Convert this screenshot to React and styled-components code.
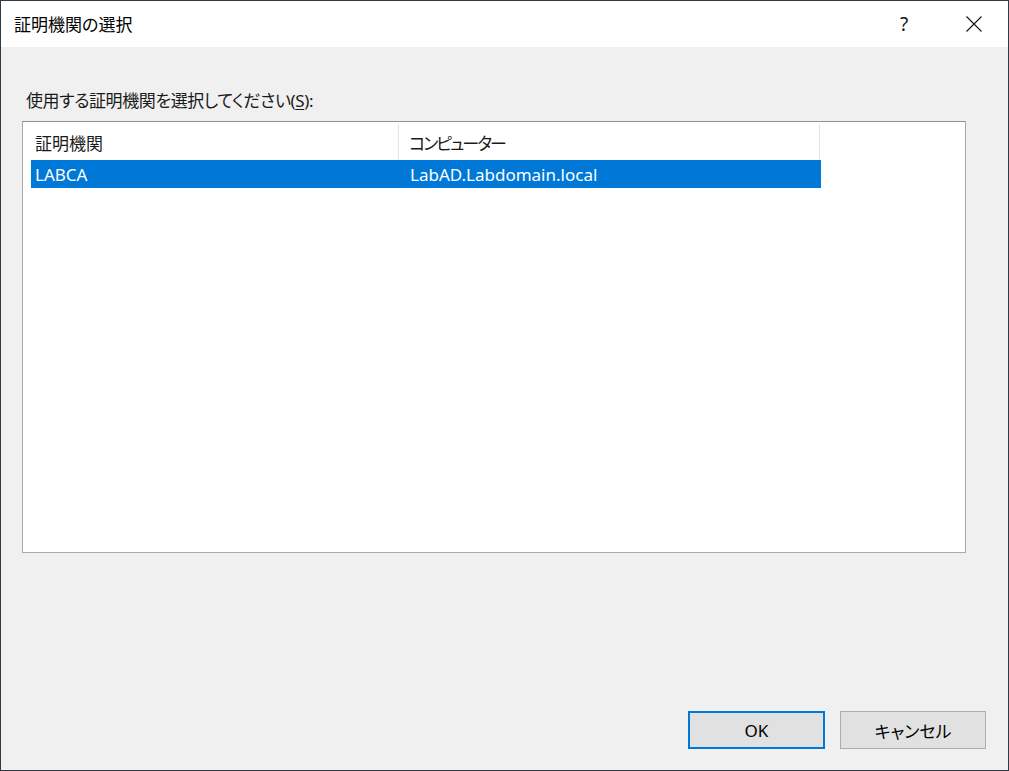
import React from "react";
import styled, { createGlobalStyle } from "styled-components";

const Global = createGlobalStyle`
  html, body {
    margin: 0;
    padding: 0;
    background: #f0f0f0;
  }
  * {
    box-sizing: border-box;
  }
`;

const Window = styled.div`
  width: 1009px;
  height: 771px;
  border: 1px solid #2e3a46;
  display: flex;
  flex-direction: column;
  font-family: "Noto Sans", "Noto Sans CJK JP", sans-serif;
  font-feature-settings: "palt";
  font-size: 17px;
  color: #000;
`;

const TitleBar = styled.div`
  height: 46px;
  background: #fff;
  display: flex;
  align-items: center;
  padding-left: 13px;
`;

const Title = styled.div`
  flex: 1;
  font-size: 17px;
  line-height: 20px;
  margin-top: 1px;
`;

const CaptionBtn = styled.div`
  width: 46px;
  height: 46px;
  display: flex;
  align-items: center;
  justify-content: center;
  font-size: 19px;
  color: #111;
`;

const Body = styled.div`
  flex: 1;
  background: #f0f0f0;
  display: flex;
  flex-direction: column;
  padding: 44px 22px 21px 21px;
`;

const Label = styled.div`
  margin-left: 4px;
  line-height: 20px;
  letter-spacing: -0.4px;
  color: #1a1a1a;
  u {
    text-decoration: underline;
    text-underline-offset: 2px;
  }
`;

const ListView = styled.div`
  margin-top: 10px;
  width: 944px;
  height: 432px;
  background: #fff;
  border: 1px solid #a6a8ab;
  border-top-color: #8f9194;
  display: flex;
  flex-direction: column;
`;

const HeaderRow = styled.div`
  height: 38px;
  display: flex;
`;

const HeaderCell = styled.div`
  width: ${(p) => p.$w}px;
  padding-left: ${(p) => p.$pad}px;
  display: flex;
  align-items: center;
  color: #1a1a1a;
  letter-spacing: ${(p) => p.$spacing || 0}px;
  border-right: 1px solid #e5e5e5;
  margin-top: 2px;
`;

const Row = styled.div`
  margin-left: 8px;
  width: 790px;
  height: 28px;
  display: flex;
  align-items: center;
  background: ${(p) => (p.$selected ? "#0078d7" : "transparent")};
  color: ${(p) => (p.$selected ? "#fff" : "#000")};
`;

const Cell = styled.div`
  width: ${(p) => p.$w}px;
  padding-left: ${(p) => p.$pad}px;
  white-space: nowrap;
`;

const Footer = styled.div`
  margin-top: auto;
  display: flex;
  justify-content: flex-end;
  gap: 15px;
`;

const Button = styled.button`
  font: inherit;
  font-size: 17px;
  height: 38px;
  width: ${(p) => p.$w}px;
  background: #e1e1e1;
  color: #000;
  border: ${(p) => (p.$default ? "2px solid #0078d7" : "1px solid #adadad")};
  padding: 0;
  display: flex;
  align-items: center;
  justify-content: center;
`;

const CloseIcon = () => (
  <svg width="16" height="16" viewBox="0 0 16 16">
    <path d="M0.5 0.5 L15.5 15.5 M15.5 0.5 L0.5 15.5" stroke="#111" strokeWidth="1.1" fill="none" />
  </svg>
);

const rows = [{ ca: "LABCA", host: "LabAD.Labdomain.local" }];

export default function App() {
  return (
    <>
      <Global />
      <Window>
        <TitleBar>
          <Title>証明機関の選択</Title>
          <CaptionBtn>?</CaptionBtn>
          <CaptionBtn style={{ marginLeft: 24, marginRight: 11 }}>
            <CloseIcon />
          </CaptionBtn>
        </TitleBar>
        <Body>
          <Label>
            使用する証明機関を選択してください(<u>S</u>):
          </Label>
          <ListView>
            <HeaderRow>
              <HeaderCell $w={376} $pad={12}>証明機関</HeaderCell>
              <HeaderCell $w={421} $pad={10} $spacing={-2}>コンピューター</HeaderCell>
            </HeaderRow>
            {rows.map((r) => (
              <Row key={r.ca} $selected>
                <Cell $w={368} $pad={4}>{r.ca}</Cell>
                <Cell $w={422} $pad={11}>{r.host}</Cell>
              </Row>
            ))}
          </ListView>
          <Footer>
            <Button $default $w={137}>OK</Button>
            <Button $w={146}>キャンセル</Button>
          </Footer>
        </Body>
      </Window>
    </>
  );
}
